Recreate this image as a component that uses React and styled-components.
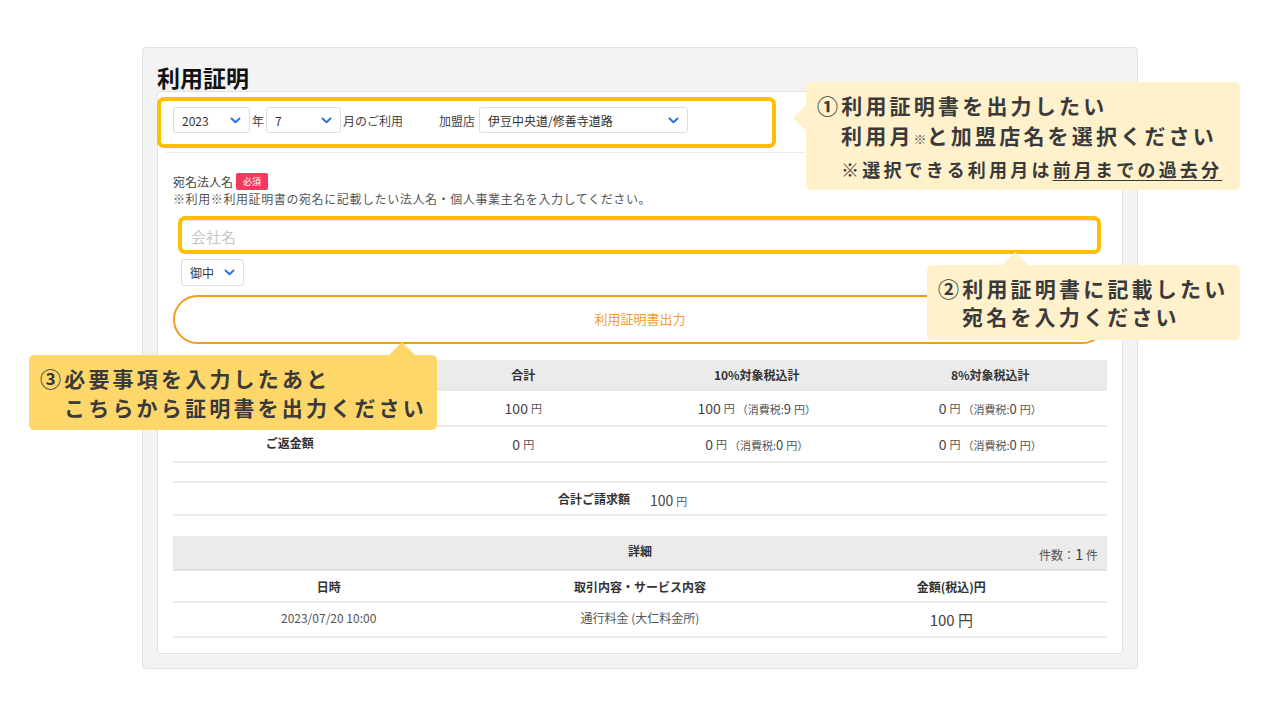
import React from 'react';
import styled, { createGlobalStyle } from 'styled-components';

const GlobalStyle = createGlobalStyle`
  html, body {
    margin: 0;
    padding: 0;
    background: #ffffff;
    font-family: "Noto Sans CJK JP", "Noto Sans", "Liberation Sans", sans-serif;
    color: #333;
  }
  * { box-sizing: border-box; }
`;

const Page = styled.div`
  position: relative;
  width: 1280px;
  height: 720px;
  padding-top: 47px;
  overflow: hidden;
`;

const Panel = styled.section`
  width: 996px;
  margin: 0 auto;
  background: #f3f3f3;
  border: 1px solid #e1e1e1;
  border-radius: 4px;
  padding: 15px 14px 14px 14px;
`;

const Title = styled.h1`
  margin: 0;
  font-size: 23px;
  line-height: 28px;
  font-weight: 700;
  color: #111;
`;

const Card = styled.div`
  background: #fff;
  border: 1px solid #e2e2e2;
  border-radius: 4px;
  padding: 15px 15px 15px 15px;
`;

const FilterRow = styled.div`
  display: flex;
  align-items: center;
  height: 26px;
  font-size: 12px;
  color: #444;
`;

const SelectBox = styled.div`
  display: flex;
  align-items: center;
  justify-content: space-between;
  width: ${(p) => p.$w}px;
  height: ${(p) => p.$h || 26}px;
  padding: 0 8px;
  border: 1px solid #dedede;
  border-radius: 3px;
  background: #fff;
  font-size: 12px;
  color: #333;
`;

const Unit = styled.span`
  margin: 0 ${(p) => p.$mr || 2}px 0 ${(p) => p.$ml || 2}px;
  font-size: 12px;
  color: #444;
`;

const Divider = styled.div`
  height: 1px;
  background: #ececec;
  margin: 19px -7px 0 -7px;
`;

const LabelRow = styled.div`
  display: flex;
  align-items: center;
  gap: 3px;
  height: 20px;
  margin-top: 18px;
  font-size: 12px;
  color: #444;
`;

const Badge = styled.span`
  display: inline-flex;
  align-items: center;
  justify-content: center;
  width: 32px;
  height: 17px;
  border-radius: 2px;
  background: #f2395e;
  color: #fff;
  font-size: 9px;
`;

const Help = styled.div`
  font-size: 12px;
  line-height: 16px;
  letter-spacing: 0.6px;
  color: #555;
`;

const NameInput = styled.div`
  margin: 13px 8px 0 8px;
  height: 32px;
  border: 1px solid #e3e3e3;
  border-radius: 3px;
  padding: 0 9px;
  display: flex;
  align-items: center;
  font-size: 15px;
  color: #c8c8c8;
`;

const SuffixWrap = styled.div`
  margin: 7px 0 0 8px;
`;

const OutputButton = styled.button`
  display: block;
  width: 100%;
  height: 49px;
  margin-top: 9px;
  padding: 0 0 3px 0;
  border: 2px solid #f29a25;
  border-radius: 25px;
  background: #fff;
  color: #f39d32;
  font-family: inherit;
  font-size: 13px;
`;

const Grid = styled.div`
  display: grid;
  grid-template-columns: repeat(${(p) => p.$cols}, 1fr);
  margin-top: ${(p) => p.$mt || 0}px;
`;

const HeadCell = styled.div`
  display: flex;
  align-items: center;
  justify-content: center;
  height: ${(p) => p.$h}px;
  background: ${(p) => (p.$shade ? '#ebebeb' : '#fff')};
  border-bottom: 2px solid #e8e8e8;
  font-size: 12px;
  font-weight: 700;
  color: #333;
`;

const Cell = styled.div`
  display: flex;
  align-items: center;
  justify-content: center;
  height: ${(p) => p.$h || 36}px;
  padding-bottom: ${(p) => (p.$lift ? 4 : 0)}px;
  border-bottom: 2px solid #ececec;
  font-size: ${(p) => p.$fs || 12}px;
  font-weight: ${(p) => (p.$bold ? 700 : 400)};
  color: ${(p) => (p.$bold ? '#333' : '#555')};
`;

const Num = styled.span`
  font-size: ${(p) => p.$fs || 14}px;
  color: #444;
`;

const Yen = styled.span`
  font-size: 11px;
  color: #555;
  margin-left: 3px;
`;

const Tax = styled.span`
  font-size: 11px;
  color: #555;
  margin-left: 2px;
`;

const TotalRow = styled.div`
  display: grid;
  grid-template-columns: 1fr 1fr;
  column-gap: 20px;
  align-items: center;
  height: 35px;
  margin-top: 18px;
  border-top: 2px solid #ececec;
  border-bottom: 2px solid #ececec;
`;

const TotalLabel = styled.span`
  text-align: right;
  font-size: 12px;
  font-weight: 700;
  color: #333;
`;

const DetailHead = styled.div`
  position: relative;
  display: flex;
  align-items: center;
  justify-content: center;
  height: 35px;
  margin-top: 20px;
  padding-bottom: 4px;
  background: #ebebeb;
  border-bottom: 2px solid #e3e3e3;
  font-size: 12px;
  font-weight: 700;
  color: #333;
`;

const Count = styled.span`
  position: absolute;
  right: 9px;
  top: 7px;
  font-size: 12px;
  font-weight: 400;
  color: #555;
`;

const Highlight = styled.div`
  position: absolute;
  left: ${(p) => p.$x}px;
  top: ${(p) => p.$y}px;
  width: ${(p) => p.$w}px;
  height: ${(p) => p.$h}px;
  border: 4px solid #fdbf00;
  border-radius: 7px;
  pointer-events: none;
`;

const Callout = styled.div`
  position: absolute;
  left: ${(p) => p.$x}px;
  top: ${(p) => p.$y}px;
  width: ${(p) => p.$w}px;
  height: ${(p) => p.$h}px;
  padding: ${(p) => p.$pt}px 0 0 11px;
  background: ${(p) => p.$bg};
  border-radius: 5px;
  font-size: 21px;
  font-weight: 700;
  line-height: ${(p) => p.$lh}px;
  letter-spacing: 3.2px;
  color: #3a3a3a;
  white-space: nowrap;

  &::before {
    content: '';
    position: absolute;
    border: 13px solid transparent;
    ${(p) =>
      p.$arrow === 'left'
        ? `left: -26px; top: ${p.$ay}px; border-right-color: ${p.$bg};`
        : `top: -26px; left: ${p.$ax}px; border-bottom-color: ${p.$bg};`}
  }
`;

const Line = styled.div`
  padding-left: ${(p) => (p.$indent ? 24 : 0)}px;
  font-size: ${(p) => p.$fs || 21}px;
`;

const Small = styled.span`
  font-size: 13px;
  font-weight: 400;
  color: #666;
  letter-spacing: 0;
`;

const Under = styled.span`
  text-decoration: underline;
  text-underline-offset: 3px;
  text-decoration-thickness: 1px;
`;

const Chevron = () => (
  <svg width="11" height="7" viewBox="0 0 11 7">
    <path d="M1.5 1.5 L5.5 5.2 L9.5 1.5" fill="none" stroke="#2f6fe0" strokeWidth="2" strokeLinecap="round" strokeLinejoin="round" />
  </svg>
);

const Select = ({ value, w, h }) => (
  <SelectBox $w={w} $h={h}>
    <span>{value}</span>
    <Chevron />
  </SelectBox>
);

// first label sits under callout ③ in the screenshot, so it is left blank
const summary = [
  { key: 'use', label: '', total: '100', t10: '100', tax10: '9', t8: '0', tax8: '0' },
  { key: 'refund', label: 'ご返金額', total: '0', t10: '0', tax10: '0', t8: '0', tax8: '0' },
];

const Amount = ({ v, tax }) => (
  <>
    <Num>{v}</Num>
    <Yen>円</Yen>
    {tax !== undefined && (
      <Tax>
        （消費税:<Num $fs={13}>{tax}</Num>
        <Yen>円</Yen>）
      </Tax>
    )}
  </>
);

export default function App() {
  return (
    <>
      <GlobalStyle />
      <Page>
        <Panel>
          <Title>利用証明</Title>
          <Card>
            <FilterRow>
              <Select value="2023" w={77} />
              <Unit>年</Unit>
              <Select value="7" w={75} />
              <Unit $mr={34}>月のご利用</Unit>
              <Unit $mr={4}>加盟店</Unit>
              <Select value="伊豆中央道/修善寺道路" w={209} />
            </FilterRow>
            <Divider />

            <LabelRow>
              宛名法人名 <Badge>必須</Badge>
            </LabelRow>
            <Help>※利用※利用証明書の宛名に記載したい法人名・個人事業主名を入力してください。</Help>
            <NameInput>会社名</NameInput>
            <SuffixWrap>
              <Select value="御中" w={63} h={27} />
            </SuffixWrap>
            <OutputButton>利用証明書出力</OutputButton>

            <Grid $cols={4} $mt={16}>
              <HeadCell $h={31} $shade />
              <HeadCell $h={31} $shade>合計</HeadCell>
              <HeadCell $h={31} $shade>10%対象税込計</HeadCell>
              <HeadCell $h={31} $shade>8%対象税込計</HeadCell>
              {summary.map((r) => (
                <React.Fragment key={r.key}>
                  <Cell $bold $lift>{r.label}</Cell>
                  <Cell><Amount v={r.total} /></Cell>
                  <Cell><Amount v={r.t10} tax={r.tax10} /></Cell>
                  <Cell><Amount v={r.t8} tax={r.tax8} /></Cell>
                </React.Fragment>
              ))}
            </Grid>

            <TotalRow>
              <TotalLabel>合計ご請求額</TotalLabel>
              <span><Num>100</Num><Yen>円</Yen></span>
            </TotalRow>

            <DetailHead>
              詳細
              <Count>件数：<Num $fs={15}>1</Num> 件</Count>
            </DetailHead>
            <Grid $cols={3}>
              <Cell $h={32} $bold>日時</Cell>
              <Cell $h={32} $bold>取引内容・サービス内容</Cell>
              <Cell $h={32} $bold>金額(税込)円</Cell>
              <Cell $h={35} $lift>2023/07/20 10:00</Cell>
              <Cell $h={35} $lift>通行料金 (大仁料金所)</Cell>
              <Cell $h={35}><Num $fs={15}>100 円</Num></Cell>
            </Grid>
          </Card>
        </Panel>

        <Highlight $x={157} $y={97} $w={619} $h={51} />
        <Highlight $x={178} $y={216} $w={923} $h={38} />

        <Callout $x={806} $y={82} $w={434} $h={108} $pt={8} $lh={30} $bg="#fef1cc" $arrow="left" $ay={23}>
          <Line>①利用証明書を出力したい</Line>
          <Line $indent>利用月<Small>※</Small>と加盟店名を選択ください</Line>
          <Line $indent $fs={18}>※選択できる利用月は<Under>前月までの過去分</Under></Line>
        </Callout>

        <Callout $x={927} $y={265} $w={313} $h={75} $pt={9} $lh={28} $bg="#fef1cc" $arrow="up" $ax={75}>
          <Line>②利用証明書に記載したい</Line>
          <Line $indent>宛名を入力ください</Line>
        </Callout>

        <Callout $x={29} $y={355} $w={408} $h={75} $pt={9} $lh={29} $bg="#fdd76a" $arrow="up" $ax={360}>
          <Line>③必要事項を入力したあと</Line>
          <Line $indent>こちらから証明書を出力ください</Line>
        </Callout>
      </Page>
    </>
  );
}
